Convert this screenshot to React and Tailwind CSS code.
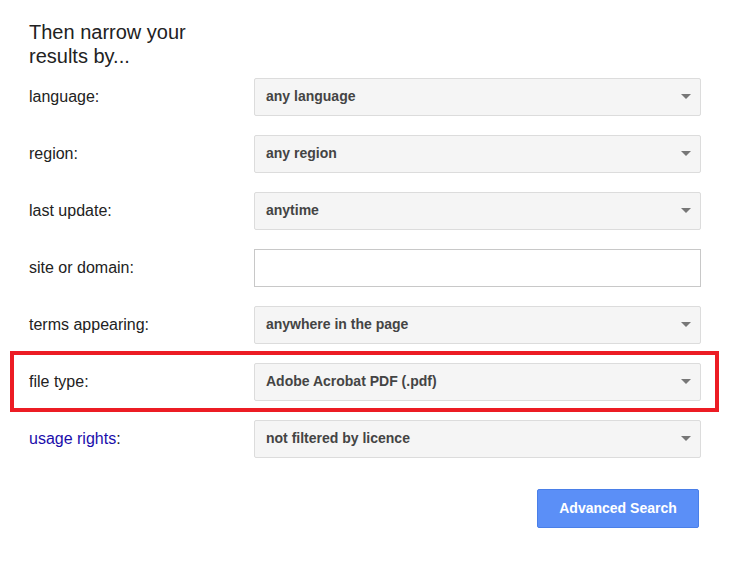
export default function App() {
  const rows = [
    ["language:", "any language"],
    ["region:", "any region"],
    ["last update:", "anytime"],
    ["site or domain:", null],
    ["terms appearing:", "anywhere in the page"],
    ["file type:", "Adobe Acrobat PDF (.pdf)", true],
    ["usage rights:", "not filtered by licence", false, true],
  ];
  return (
    <div className="w-[753px] h-[563px] bg-white relative" style={{ fontFamily: '"Liberation Sans", Arial, sans-serif' }}>
      <div className="pl-[29px] pt-[20px] text-[20px] leading-[24px] text-[#222]">Then narrow your<br />results by...</div>
      {rows.map(([label, val, hl, link]) => (
        <div key={label} className="relative h-[57px] flex items-center">
          {hl && <div className="absolute left-[10px] w-[709px] top-[-2px] h-[61px] border-4 border-[#ec1c24]" />}
          <div className="w-[254px] pl-[29px] text-[16px] text-[#222]">
            {link ? <><span className="text-[#1a0dab]">usage rights</span>:</> : label}
          </div>
          {val === null ? (
            <div className="w-[447px] h-[38px] bg-white border border-[#c8c8c8]" />
          ) : (
            <div className="w-[447px] h-[38px] bg-[#f5f5f5] border border-[#dcdcdc] rounded-[2px] flex items-center justify-between pl-[11px] pr-[9px]">
              <span className="text-[14px] font-bold text-[#444]">{val}</span>
              <span className="w-0 h-0 border-l-[5px] border-r-[5px] border-t-[5px] border-l-transparent border-r-transparent border-t-[#777]" />
            </div>
          )}
        </div>
      ))}
      <div className="flex justify-end w-[699px] mt-[22px]">
        <div className="w-[162px] h-[39px] rounded-[2px] bg-[#5b8ff7] border border-[#4a7fe8] text-white font-bold text-[14px] flex items-center justify-center">Advanced Search</div>
      </div>
    </div>
  );
}
